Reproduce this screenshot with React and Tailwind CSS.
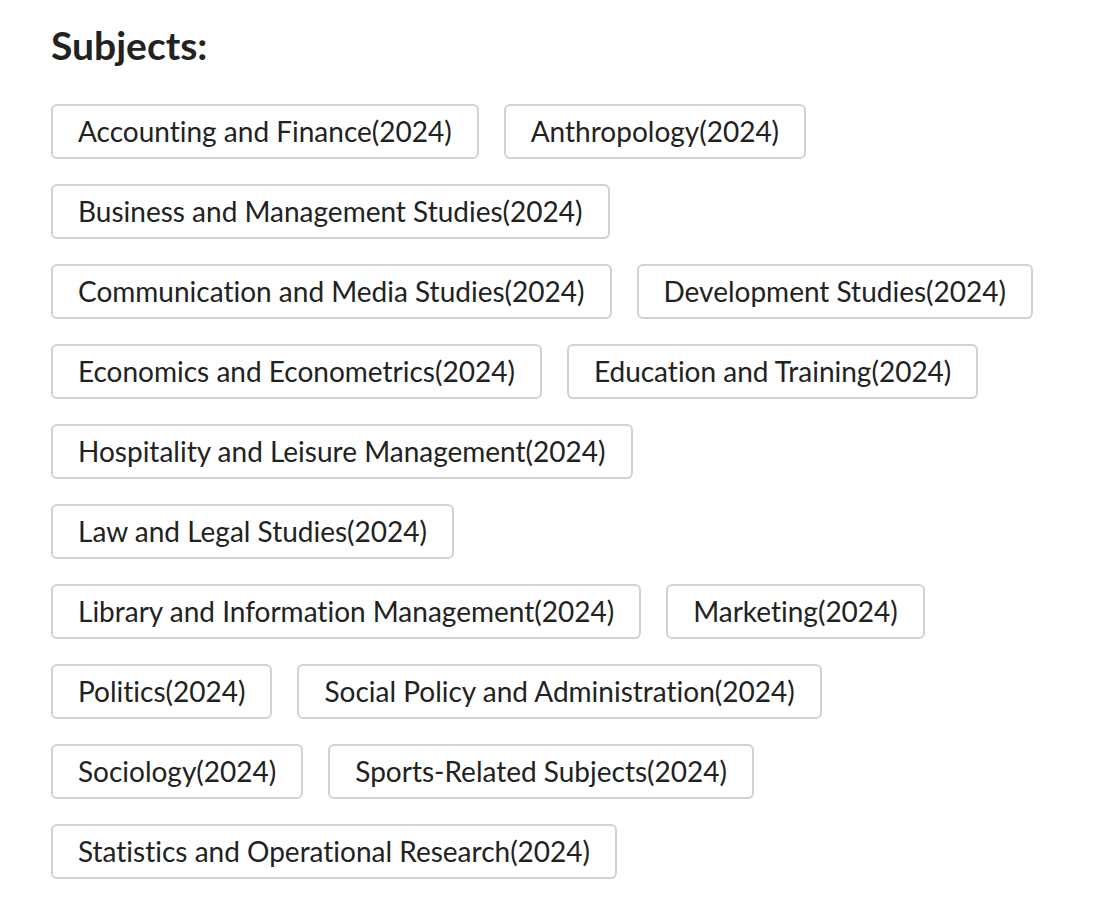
const subjects = [
  'Accounting and Finance',
  'Anthropology',
  'Business and Management Studies',
  'Communication and Media Studies',
  'Development Studies',
  'Economics and Econometrics',
  'Education and Training',
  'Hospitality and Leisure Management',
  'Law and Legal Studies',
  'Library and Information Management',
  'Marketing',
  'Politics',
  'Social Policy and Administration',
  'Sociology',
  'Sports-Related Subjects',
  'Statistics and Operational Research',
];

export default function App() {
  return (
    <div className="min-h-screen bg-white px-[51px] pt-[22px] pb-8 text-[#222] font-['Lato',sans-serif] [font-variant-ligatures:none]">
      <h2 className="text-[39px] font-bold leading-[1.2] mb-[35px]">Subjects:</h2>
      <div className="flex flex-wrap gap-[25px]">
        {subjects.map((s) => (
          <div
            key={s}
            className="h-[55px] px-[25px] flex items-center rounded-[6px] border-2 border-[#d2d2d2] text-[28px] leading-none whitespace-nowrap"
          >
            {s}(2024)
          </div>
        ))}
      </div>
    </div>
  );
}
